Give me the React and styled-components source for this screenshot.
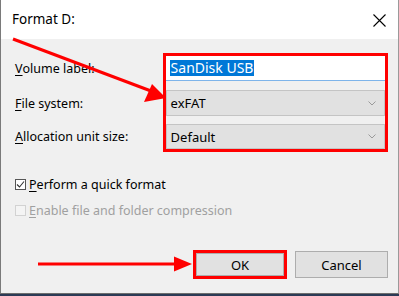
import React from 'react';
import styled, { createGlobalStyle } from 'styled-components';

const GlobalStyle = createGlobalStyle`
  html, body {
    margin: 0;
    padding: 0;
    background: #2b3a55;
  }
  body {
    font-family: "Noto Sans", "Open Sans", sans-serif;
    font-size: 12px;
    color: #000;
  }
`;

function Chevron() {
  return (
    <svg width="8" height="5" viewBox="0 0 8 5">
      <path d="M0.5 0.5 L4 4 L7.5 0.5" fill="none" stroke="#9a9a9a" strokeWidth="1" />
    </svg>
  );
}

function CloseIcon() {
  return (
    <svg width="13" height="13" viewBox="0 0 13 13">
      <path d="M0.5 0.5 L12.5 12.5 M12.5 0.5 L0.5 12.5" stroke="#000" strokeWidth="1.1" />
    </svg>
  );
}

function Arrows() {
  return (
    <Overlay width="399" height="296" viewBox="0 0 399 296">
      <line x1="12" y1="39" x2="150" y2="91" stroke="#ff0000" strokeWidth="3" />
      <polygon points="165,98 151,84 143,102" fill="#ff0000" />
      <line x1="37" y1="264" x2="176" y2="264" stroke="#ff0000" strokeWidth="3" />
      <polygon points="173,256.5 191,264 173,271.5" fill="#ff0000" />
    </Overlay>
  );
}

function App() {
  return (
    <>
      <GlobalStyle />
      <Window>
        <TitleBar>
          <span>Format D:</span>
          <CloseButton>
            <CloseIcon />
          </CloseButton>
        </TitleBar>
        <Body>
          <Form>
            <Labels>
              <Label h={25}>
                <u>V</u>olume label:
              </Label>
              <Label h={26}>
                <u>F</u>ile system:
              </Label>
              <Label h={25}>
                <u>A</u>llocation unit size:
              </Label>
            </Labels>
            <Highlight>
              <TextField>
                <Selected>SanDisk USB</Selected>
              </TextField>
              <Combo h={26}>
                <span>exFAT</span>
                <Chevron />
              </Combo>
              <Combo h={25}>
                <span>Default</span>
                <Chevron />
              </Combo>
            </Highlight>
          </Form>

          <Options>
            <CheckRow>
              <Box>
                <svg width="9" height="9" viewBox="0 0 9 9">
                  <path d="M1 4.5 L3.5 7 L8 1.5" fill="none" stroke="#333" strokeWidth="1.1" />
                </svg>
              </Box>
              <span>
                <u>P</u>erform a quick format
              </span>
            </CheckRow>
            <CheckRow disabled>
              <Box disabled />
              <span>
                <u>E</u>nable file and folder compression
              </span>
            </CheckRow>
          </Options>

          <Buttons>
            <ButtonFrame>
              <Button small>OK</Button>
            </ButtonFrame>
            <Button>Cancel</Button>
          </Buttons>
        </Body>
        <Arrows />
      </Window>
    </>
  );
}

const Window = styled.div`
  position: relative;
  width: 397px;
  height: 293px;
  display: flex;
  flex-direction: column;
  background: #f0f0f0;
  border-left: 1px solid #7a7a7a;
  border-right: 1px solid #9a9a9a;
  border-bottom: 1px solid #6d6d6d;
  overflow: hidden;
`;

const TitleBar = styled.div`
  height: 39px;
  flex-shrink: 0;
  background: #fff;
  display: flex;
  align-items: center;
  justify-content: space-between;
  padding: 0 12px 0 11px;
  font-size: 13.5px;
  span {
    margin-top: -1px;
  }
`;

const CloseButton = styled.div`
  display: flex;
  align-items: center;
  margin-top: 1px;
`;

const Body = styled.div`
  flex: 1;
  display: flex;
  flex-direction: column;
  padding: 14px 10px 0 14px;
`;

const Form = styled.div`
  display: flex;
`;

const Labels = styled.div`
  width: 148px;
  display: flex;
  flex-direction: column;
  padding-top: 3px;
  gap: 8px;
  font-size: 12.5px;
`;

const Label = styled.div`
  height: ${(p) => p.h}px;
  display: flex;
  align-items: center;
  &:first-child {
    margin-bottom: 1px;
  }
  u {
    text-underline-offset: 2px;
  }
`;

const Highlight = styled.div`
  width: 220px;
  border: 3px solid #ff0000;
  display: flex;
  flex-direction: column;
  gap: 8px;
`;

const TextField = styled.div`
  height: 25px;
  box-sizing: border-box;
  background: #fff;
  border-bottom: 1px solid #7eb4ea;
  display: flex;
  align-items: center;
  padding: 0 0 1px 4px;
  margin-bottom: 1px;
`;

const Selected = styled.span`
  background: #0078d7;
  color: #fff;
  font-size: 14px;
  line-height: 16px;
  padding: 0 1px;
`;

const Combo = styled.div`
  height: ${(p) => p.h}px;
  box-sizing: border-box;
  background: #e1e1e1;
  border: 1px solid #c4c4c4;
  display: flex;
  align-items: center;
  justify-content: space-between;
  padding: 0 8px 0 4px;
  font-size: 13px;
`;

const Options = styled.div`
  display: flex;
  flex-direction: column;
  margin-top: 24px;
  gap: 9px;
  font-size: 12.5px;
`;

const CheckRow = styled.div`
  display: flex;
  align-items: center;
  gap: 3px;
  height: 17px;
  color: ${(p) => (p.disabled ? '#a0a0a0' : '#000')};
  u {
    text-underline-offset: 2px;
  }
`;

const Box = styled.div`
  width: 11px;
  height: 11px;
  box-sizing: border-box;
  border: 1px solid ${(p) => (p.disabled ? '#d2d2d2' : '#555')};
  background: ${(p) => (p.disabled ? '#f4f4f4' : '#fff')};
  display: flex;
  align-items: center;
  justify-content: center;
`;

const Buttons = styled.div`
  display: flex;
  justify-content: flex-end;
  align-items: center;
  gap: 8px;
  margin-top: 31px;
`;

const ButtonFrame = styled.div`
  border: 3px solid #ff0000;
  display: flex;
`;

const Button = styled.div`
  width: ${(p) => (p.small ? '88px' : '93px')};
  height: ${(p) => (p.small ? '23px' : '27px')};
  box-sizing: border-box;
  background: #e1e1e1;
  border: 1px solid #adadad;
  display: flex;
  align-items: center;
  justify-content: center;
  font-size: 13px;
`;

const Overlay = styled.svg`
  position: absolute;
  left: 0;
  top: 0;
  pointer-events: none;
`;

export default App;
